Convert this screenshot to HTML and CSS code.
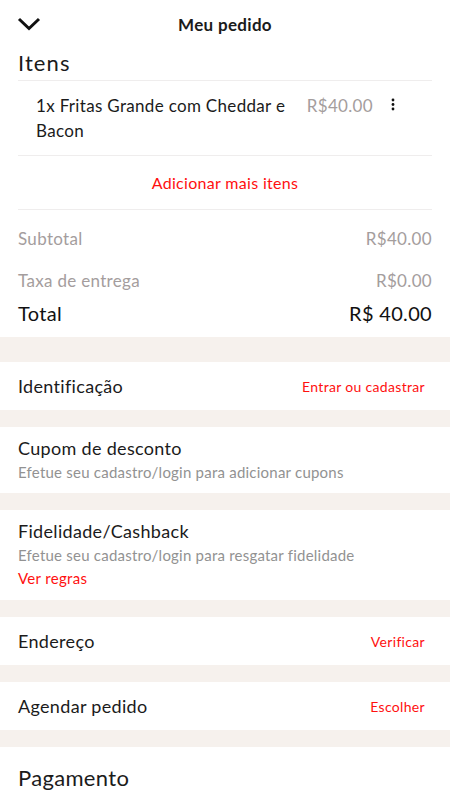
FILE: index.html
```html
<!DOCTYPE html>
<html lang="pt-BR">
<head>
  <meta charset="UTF-8">
  <meta name="viewport" content="width=device-width, initial-scale=1.0">
  <title>Meu pedido</title>
  <link rel="stylesheet" href="styles.css">
</head>
<body>

  <div class="header">
    <svg class="back" width="24" height="14" viewBox="0 0 24 14"><path d="M2 2 L12 11.5 L22 2" fill="none" stroke="#111" stroke-width="3"/></svg>
    <span class="header-title">Meu pedido</span>
  </div>

  <div class="card items">
    <div class="items-title">Itens</div>
    <div class="item">
      <div class="item-name">1x Fritas Grande com Cheddar e Bacon</div>
      <div class="item-price">R$40.00</div>
      <svg class="kebab" width="4" height="14" viewBox="0 0 4 14"><circle cx="2" cy="2" r="1.4"/><circle cx="2" cy="6.5" r="1.4"/><circle cx="2" cy="11" r="1.4"/></svg>
    </div>
    <div class="add-more">Adicionar mais itens</div>
    <div class="summary">
      <div class="sum-row muted sub"><span>Subtotal</span><span>R$40.00</span></div>
      <div class="sum-row muted fee"><span>Taxa de entrega</span><span>R$0.00</span></div>
      <div class="sum-row total"><span>Total</span><span>R$ 40.00</span></div>
    </div>
  </div>

  <div class="card row first">
    <span class="row-title">Identificação</span>
    <span class="link">Entrar ou cadastrar</span>
  </div>

  <div class="card block">
    <div class="row-title">Cupom de desconto</div>
    <div class="hint">Efetue seu cadastro/login para adicionar cupons</div>
  </div>

  <div class="card block">
    <div class="row-title">Fidelidade/Cashback</div>
    <div class="hint">Efetue seu cadastro/login para resgatar fidelidade</div>
    <div class="rules">Ver regras</div>
  </div>

  <div class="card row">
    <span class="row-title">Endereço</span>
    <span class="link">Verificar</span>
  </div>

  <div class="card row">
    <span class="row-title">Agendar pedido</span>
    <span class="link">Escolher</span>
  </div>

  <div class="card payment">
    <div class="payment-title">Pagamento</div>
  </div>

</body>
</html>
```

FILE: styles.css
```css
body { font-family: Lato, "Open Sans", sans-serif; letter-spacing: 0.02em; background-color: #f6f1ed; margin: 0; padding: 0; color: #1b1b1b; }
.header { height: 48px; display: flex; align-items: center; justify-content: center; position: relative; background-color: #fff; }
.back { position: absolute; left: 17px; top: 17px; }
.header-title { font-size: 17px; font-weight: bold; }
.card { background-color: #fff; margin-top: 17px; }
.items { margin-top: 0; padding: 0 18px; }
.items-title { font-size: 22px; line-height: 30px; padding-bottom: 2px; letter-spacing: 0.05em; border-bottom: 1px solid #efeded; }
.item { display: flex; align-items: flex-start; padding: 12px 0 12px 18px; border-bottom: 1px solid #efeded; }
.item-name { flex: 1; font-size: 17px; line-height: 25px; }
.item-price { font-size: 17px; line-height: 25px; color: #a49d9d; margin-left: 12px; }
.kebab { margin: 5px 37px 0 18px; fill: #111; }
.add-more { text-align: center; color: #ff1010; font-size: 16px; line-height: 53px; border-bottom: 1px solid #efeded; }
.summary { padding: 17px 0 10px; }
.sum-row { display: flex; justify-content: space-between; font-size: 17px; line-height: 24px; }
.muted { color: #a49d9d; }
.sub { margin-bottom: 18px; }
.fee { margin-bottom: 6px; }
.total { font-size: 20px; line-height: 28px; color: #111; }
.row { height: 48px; display: flex; align-items: center; justify-content: space-between; padding: 0 25px 0 18px; }
.first { margin-top: 25px; }
.row-title { font-size: 18px; line-height: 24px; }
.link { color: #ff1010; font-size: 14px; }
.block { padding: 9px 18px 11px; }
.hint { font-size: 15px; line-height: 20px; color: #929292; margin-top: 2px; letter-spacing: 0.015em; }
.rules { color: #ff1010; font-size: 15px; line-height: 20px; margin-top: 3px; padding-bottom: 1px; }
.payment { padding: 19px 18px 40px; }
.payment-title { font-size: 22px; line-height: 24px; }
```
